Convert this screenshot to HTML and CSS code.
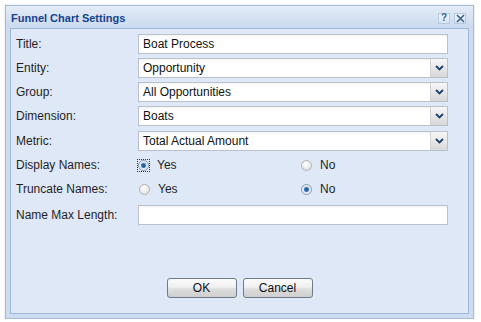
FILE: index.html
```html
<!DOCTYPE html>
<html>
<head>
<meta charset="utf-8">
<link rel="stylesheet" href="styles.css">
</head>
<body>
<div class="page">
  <div class="window">
    <div class="header">
      <span class="title">Funnel Chart Settings</span>
      <div class="tools">
        <span class="tool tool-help">?</span>
        <span class="tool tool-close">
          <svg width="9" height="9" viewBox="0 0 9 9"><path d="M1 1 L8 8 M8 1 L1 8" stroke="#3e5f8a" stroke-width="1.6" fill="none"/></svg>
        </span>
      </div>
    </div>
    <div class="body">
      <div class="form">
        <div class="row">
          <span class="label">Title:</span>
          <div class="field"><span class="value">Boat Process</span></div>
        </div>
        <div class="row">
          <span class="label">Entity:</span>
          <div class="field combo"><span class="value">Opportunity</span><span class="trigger"><svg width="9" height="6" viewBox="0 0 9 6"><path d="M1 1 L4.5 4.5 L8 1" stroke="#1f3d6e" stroke-width="1.8" fill="none"/></svg></span></div>
        </div>
        <div class="row">
          <span class="label">Group:</span>
          <div class="field combo"><span class="value">All Opportunities</span><span class="trigger"><svg width="9" height="6" viewBox="0 0 9 6"><path d="M1 1 L4.5 4.5 L8 1" stroke="#1f3d6e" stroke-width="1.8" fill="none"/></svg></span></div>
        </div>
        <div class="row">
          <span class="label">Dimension:</span>
          <div class="field combo"><span class="value">Boats</span><span class="trigger"><svg width="9" height="6" viewBox="0 0 9 6"><path d="M1 1 L4.5 4.5 L8 1" stroke="#1f3d6e" stroke-width="1.8" fill="none"/></svg></span></div>
        </div>
        <div class="row row-shift">
          <span class="label">Metric:</span>
          <div class="field combo"><span class="value">Total Actual Amount</span><span class="trigger"><svg width="9" height="6" viewBox="0 0 9 6"><path d="M1 1 L4.5 4.5 L8 1" stroke="#1f3d6e" stroke-width="1.8" fill="none"/></svg></span></div>
        </div>
        <div class="row">
          <span class="label">Display Names:</span>
          <div class="radios">
            <span class="option"><span class="focus"><span class="radio checked"></span></span><span class="opt-text">Yes</span></span>
            <span class="option"><span class="radio"></span><span class="opt-text">No</span></span>
          </div>
        </div>
        <div class="row">
          <span class="label">Truncate Names:</span>
          <div class="radios">
            <span class="option"><span class="radio"></span><span class="opt-text">Yes</span></span>
            <span class="option"><span class="radio checked"></span><span class="opt-text">No</span></span>
          </div>
        </div>
        <div class="row row-last">
          <span class="label">Name Max Length:</span>
          <div class="field"></div>
        </div>
      </div>
      <div class="buttons">
        <span class="btn">OK</span>
        <span class="btn">Cancel</span>
      </div>
    </div>
  </div>
</div>
</body>
</html>
```
FILE: styles.css
```css
html, body {
  margin: 0;
  padding: 0;
  background: #ffffff;
}
.page {
  padding: 5px 0 0 5px;
  font-family: "Liberation Sans", Arial, sans-serif;
  font-size: 12px;
  color: #1a1a1a;
}
.window {
  box-sizing: border-box;
  width: 469px;
  height: 314px;
  border: 1px solid #a5bcd8;
  background: #cddcf0;
  box-shadow: 0 0 2px rgba(120, 130, 140, 0.35);
  padding: 0 4px 4px 4px;
  display: flex;
  flex-direction: column;
}
.header {
  height: 22px;
  margin: 0 -4px;
  padding: 0 7px 0 5px;
  background: linear-gradient(#e3ebf6, #cbdaef);
  display: flex;
  align-items: center;
  justify-content: space-between;
}
.title {
  font-weight: bold;
  font-size: 11px;
  color: #15428b;
  position: relative;
  top: 1px;
}
.tools {
  display: flex;
  gap: 4px;
  position: relative;
  top: 1px;
}
.tool {
  box-sizing: border-box;
  width: 12px;
  height: 11px;
  border: 1px solid #b4c8e2;
  background: linear-gradient(#f2f6fc, #d6e3f3);
  display: flex;
  align-items: center;
  justify-content: center;
  font-weight: bold;
  font-size: 10px;
  color: #3e5f8a;
  line-height: 1;
}
.body {
  flex: 1;
  border: 1px solid #9fb8d8;
  background: #dfe8f6;
  display: flex;
  flex-direction: column;
}
.form {
  flex: 1;
  padding: 5px 0 0 5px;
  display: flex;
  flex-direction: column;
  gap: 4px;
}
.row {
  display: grid;
  grid-template-columns: 122px 310px;
  align-items: center;
  height: 20px;
}
.row-shift {
  margin-top: 1px;
}
.row-last {
  margin-top: 2px;
}
.label {
  color: #1f1f1f;
}
.field {
  box-sizing: border-box;
  height: 20px;
  border: 1px solid #b9c1cc;
  background: linear-gradient(#f4f4f4 0, #ffffff 3px);
  display: flex;
  align-items: center;
  position: relative;
}
.value {
  padding-left: 4px;
  color: #111;
}
.combo .trigger {
  position: absolute;
  right: 0;
  top: 0;
  bottom: 0;
  width: 16px;
  background: linear-gradient(#f7f7f7, #d8d8d8);
  border-left: 1px solid #d0d4da;
  display: flex;
  align-items: center;
  justify-content: center;
}
.radios {
  display: flex;
}
.option {
  flex: none;
  display: flex;
  align-items: center;
}
.option:first-child {
  width: 162px;
}
.focus {
  box-sizing: border-box;
  width: 13px;
  height: 13px;
  margin-left: -1px;
  border: 1px dotted #333;
  display: flex;
  align-items: center;
  justify-content: center;
}
.focus + .opt-text {
  margin-left: 7px;
}
.radio {
  box-sizing: border-box;
  width: 11px;
  height: 11px;
  border-radius: 50%;
  border: 1px solid #b3b3b3;
  background: radial-gradient(circle at 40% 35%, #ffffff 0, #e8e8e8 60%, #d4d4d4 100%);
  margin-left: 1px;
}
.focus .radio {
  margin-left: 0;
}
.radio.checked {
  border-color: #8c9aaa;
  background: radial-gradient(circle, #1c5a97 0, #2f74b8 2px, #dfe6ee 3px, #f6f6f6 100%);
}
.opt-text {
  margin-left: 8px;
  color: #1f1f1f;
}
.buttons {
  display: flex;
  justify-content: center;
  gap: 6px;
  padding-bottom: 15px;
}
.btn {
  box-sizing: border-box;
  width: 70px;
  height: 20px;
  border: 1px solid #6e7b8c;
  border-radius: 3px;
  background: linear-gradient(#fbfbfb 0, #f0f0f0 45%, #dddddd 55%, #cfcfcf 100%);
  display: flex;
  align-items: center;
  justify-content: center;
  color: #111;
  font-size: 12px;
}
```
